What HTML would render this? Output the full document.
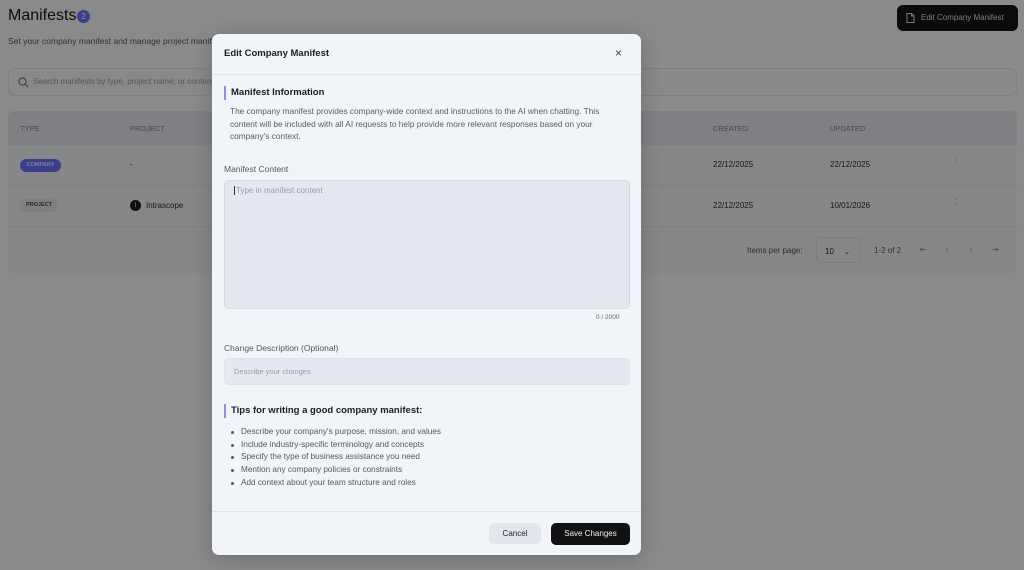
<!DOCTYPE html>
<html><head><meta charset="utf-8"><style>
*{box-sizing:border-box;margin:0;padding:0}
html,body{background:#fcfcfd}
body{width:1024px;height:570px;overflow:hidden;font-family:"Liberation Sans",sans-serif;position:relative;color:#1c1c1e}
.a{position:absolute}
.title{left:8px;top:7px;font-size:16px;color:#161618}
.badge{left:77px;top:10px;width:13px;height:13px;border-radius:50%;background:#6b72ff;color:#fff;font-size:8px;text-align:center;line-height:13px}
.sub{left:8px;top:36px;font-size:8.5px;color:#5a5a62}
.btn{left:897px;top:5px;width:121px;height:26px;background:#141416;border-radius:6px;color:#e0e0e4;font-size:8px;line-height:26px;padding-left:24px}
.search{left:8px;top:68px;width:1009px;height:28px;border:1px solid #e6e7ea;border-radius:6px;background:#f8f9fa;font-size:8px;color:#9a9ba2;line-height:26px;padding-left:24px}
.tbl{left:8px;top:111px;width:1009px;height:163px;border-radius:6px;background:#f5f6f8;overflow:hidden}
.th{position:absolute;left:0;top:0;width:100%;height:34px;background:#e7e9ef}
.t{position:absolute;font-size:7.5px;color:#85868d}
.d{position:absolute;font-size:8px;color:#2a2a30}
.line{position:absolute;left:0;width:100%;height:1px;background:#e6e7eb}
.ov{position:absolute;left:0;top:0;width:1024px;height:570px;background:rgba(0,0,0,.45)}
.modal{left:212px;top:34px;width:429px;height:521px;background:#f1f4f9;border-radius:7px;box-shadow:0 4px 20px rgba(0,0,0,.2)}
.m{position:absolute}
.h{font-size:9.5px;font-weight:bold;color:#1c1c20}
.p{font-size:8.3px;color:#5a5c63;line-height:12.7px}
.lbl{font-size:8.5px;color:#55575e}
.bar{position:absolute;width:2px;background:#8e93e0}
ul{list-style:none}
li{font-size:8.2px;color:#55575d;line-height:12.7px;position:relative;padding-left:17px}
li:before{content:"";position:absolute;left:7px;top:5px;width:3px;height:3px;border-radius:50%;background:#55575d}
</style></head><body>
<div class="a title">Manifests</div>
<div class="a badge">2</div>
<div class="a sub">Set your company manifest and manage project manifests</div>
<div class="a btn"><svg class="a" style="left:9px;top:8px" width="9" height="10" viewBox="0 0 9 10"><path d="M1 .5h4.5L8 3v6.5H1z M5.5.5V3H8" fill="none" stroke="#e0e0e4" stroke-width="1"/></svg>Edit Company Manifest</div>
<div class="a search"><svg class="a" style="left:9px;top:8px" width="11" height="11" viewBox="0 0 11 11"><circle cx="4.5" cy="4.5" r="3.6" fill="none" stroke="#75767c" stroke-width="1.1"/><path d="M7.2 7.2l3 3" stroke="#75767c" stroke-width="1.1"/></svg>Search manifests by type, project name, or content...</div>
<div class="a tbl">
<div class="th"></div>
<div class="t" style="left:12px;top:13px">TYPE</div>
<div class="t" style="left:122px;top:13px">PROJECT</div>
<div class="t" style="left:705px;top:13px">CREATED</div>
<div class="t" style="left:822px;top:13px">UPDATED</div>
<div class="d" style="left:12px;top:48px;width:41px;height:13px;border-radius:7px;background:#6b72ff;color:#e6e8ff;font-size:5.5px;font-weight:bold;text-align:center;line-height:13px">COMPANY</div>
<div class="d" style="left:122px;top:49px">-</div>
<div class="d" style="left:705px;top:49px">22/12/2025</div>
<div class="d" style="left:822px;top:49px">22/12/2025</div>
<div class="d" style="left:944px;top:46px;color:#999">⋮</div>
<div class="line" style="top:74px"></div>
<div class="d" style="left:12px;top:88px;width:38px;height:13px;border-radius:7px;background:#e6e7ea;color:#44454b;font-size:5.5px;font-weight:bold;text-align:center;line-height:13px">PROJECT</div>
<div class="d" style="left:122px;top:89px;width:11px;height:11px;border-radius:50%;background:#1a1a1c;color:#ddd;font-size:7px;text-align:center;line-height:11px">I</div>
<div class="d" style="left:138px;top:90px">Intrascope</div>
<div class="d" style="left:705px;top:90px">22/12/2025</div>
<div class="d" style="left:822px;top:90px">10/01/2026</div>
<div class="d" style="left:944px;top:87px;color:#999">⋮</div>
<div class="line" style="top:115px"></div>
<div class="d" style="left:739px;top:135px;color:#55565c">Items per page:</div>
<div class="d" style="left:808px;top:126px;width:45px;height:26px;border:1px solid #e3e4e8;border-radius:4px;padding:9px 0 0 8px">10 <span style="margin-left:8px;font-size:7px">⌄</span></div>
<div class="d" style="left:866px;top:135px;color:#55565c">1-2 of 2</div>
<div class="d" style="left:912px;top:134px;color:#888">⇤</div>
<div class="d" style="left:938px;top:134px;color:#888">‹</div>
<div class="d" style="left:962px;top:134px;color:#888">›</div>
<div class="d" style="left:984px;top:134px;color:#888">⇥</div>
</div>
<div class="ov"></div>

<div class="a modal">
<div class="m h" style="left:12px;top:14px;font-size:9.5px">Edit Company Manifest</div>
<div class="m" style="left:403px;top:12px;font-size:12px;color:#444">×</div>
<div class="m" style="left:0;top:40px;width:100%;height:1px;background:#dfe3ea"></div>
<div class="bar" style="left:12px;top:52px;height:14px"></div>
<div class="m h" style="left:19px;top:53px">Manifest Information</div>
<div class="m p" style="left:18px;top:71px;width:392px">The company manifest provides company-wide context and instructions to the AI when chatting. This content will be included with all AI requests to help provide more relevant responses based on your company's context.</div>
<div class="m lbl" style="left:12px;top:130px">Manifest Content</div>
<div class="m" style="left:12px;top:146px;width:406px;height:129px;border:1px solid #d5d9e1;border-radius:5px;background:#e5e8ef"><div style="position:absolute;left:9px;top:5px;font-size:8px;color:#9a9ca3;border-left:1px solid #333;padding-left:1px">Type in manifest content</div></div>
<div class="m" style="left:384px;top:280px;font-size:6.5px;color:#666">0 / 2000</div>
<div class="m lbl" style="left:12px;top:309px">Change Description (Optional)</div>
<div class="m" style="left:12px;top:324px;width:406px;height:27px;border:1px solid #dde1e8;border-radius:5px;background:#e5e8ef;font-size:7.5px;color:#9a9ca3;line-height:25px;padding-left:9px">Describe your changes</div>
<div class="bar" style="left:12px;top:370px;height:14px"></div>
<div class="m h" style="left:19px;top:371px">Tips for writing a good company manifest:</div>
<ul class="m" style="left:12px;top:392px">
<li>Describe your company's purpose, mission, and values</li>
<li>Include industry-specific terminology and concepts</li>
<li>Specify the type of business assistance you need</li>
<li>Mention any company policies or constraints</li>
<li>Add context about your team structure and roles</li>
</ul>
<div class="m" style="left:0;top:477px;width:100%;height:1px;background:#dfe3ea"></div>
<div class="m" style="left:277px;top:489px;width:52px;height:21px;border-radius:5px;background:#e3e6ec;font-size:8px;text-align:center;line-height:21px;color:#222">Cancel</div>
<div class="m" style="left:339px;top:489px;width:79px;height:22px;border-radius:5px;background:#111113;font-size:8px;text-align:center;line-height:22px;color:#eee">Save Changes</div>
</div>
</body></html>
